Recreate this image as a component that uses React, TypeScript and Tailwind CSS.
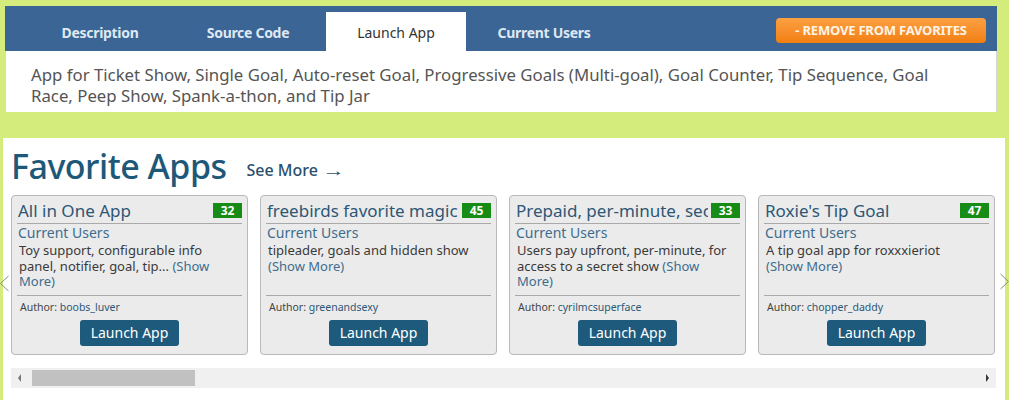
type AppCard = {
  title: string;
  users: number;
  desc: string;
  author: string;
};

const apps: AppCard[] = [
  {
    title: "All in One App",
    users: 32,
    desc: "Toy support, configurable info panel, notifier, goal, tip...",
    author: "boobs_luver",
  },
  {
    title: "freebirds favorite magic",
    users: 45,
    desc: "tipleader, goals and hidden show",
    author: "greenandsexy",
  },
  {
    title: "Prepaid, per-minute, secret show",
    users: 33,
    desc: "Users pay upfront, per-minute, for access to a secret show",
    author: "cyrilmcsuperface",
  },
  {
    title: "Roxie's Tip Goal",
    users: 47,
    desc: "A tip goal app for roxxxieriot",
    author: "chopper_daddy",
  },
];

const tabs = ["Description", "Source Code", "Launch App", "Current Users"];

function Card({ app }: { app: AppCard }) {
  return (
    <div className="flex h-[160px] w-[237px] shrink-0 flex-col rounded-[4px] border border-[#b9b9b9] bg-[#ebebeb] px-[5px]">
      <div className="flex h-[28px] items-center justify-between border-b border-[#a9a9a9] pt-[2px]">
        <span className="overflow-hidden whitespace-nowrap pl-px text-[17px] leading-[21px] text-[#2d5775]">
          {app.title}
        </span>
        <span className="ml-[3px] flex h-[15px] w-[29px] shrink-0 items-center justify-center bg-[#168c16] text-[12px] font-bold leading-none text-white">
          {app.users}
        </span>
      </div>
      <div className="pl-px text-[14px] leading-[17px] text-[#3d6d8e]">Current Users</div>
      <div className="h-[55px] border-b border-[#a9a9a9] pl-[2px] pr-[12px] pt-[2px] text-[13px] leading-[15.5px] text-[#3a3a3a]">
        {app.desc} <span className="text-[#3d6d8e]">(Show More)</span>
      </div>
      <div className="mt-[4px] pl-[3px] text-[10.5px] leading-[14px] text-[#444]">
        Author: <span className="text-[#2d5775]">{app.author}</span>
      </div>
      <div className="mt-[6px] flex justify-center">
        <button className="h-[26px] w-[99px] rounded-[3px] bg-[#1d5a7c] text-[14px] leading-none text-white">
          Launch App
        </button>
      </div>
    </div>
  );
}

export default function App() {
  return (
    <div
      className="h-[400px] w-[1009px] overflow-hidden bg-[#d4ec7c]"
      style={{ fontFamily: '"Noto Sans", "Open Sans", sans-serif' }}
    >
      <div className="ml-[5px] mr-[12px] pt-[6px]">
        <div className="flex h-[45px] items-end justify-between bg-[#3a6595] pl-[25px] pr-[11px]">
          <div className="flex gap-[8px]">
            {tabs.map((t) =>
              t === "Launch App" ? (
                <div
                  key={t}
                  className="flex h-[39px] w-[140px] items-center justify-center bg-white pt-[2px] text-[14px] text-[#333]"
                >
                  {t}
                </div>
              ) : (
                <div
                  key={t}
                  className="flex h-[39px] w-[140px] items-center justify-center pt-[2px] text-[14px] font-bold tracking-[-0.3px] text-[#dfe8f2]"
                >
                  {t}
                </div>
              ),
            )}
          </div>
          <button className="mb-[8px] h-[25px] w-[210px] rounded-[4px] bg-gradient-to-b from-[#fba040] to-[#f27f0c] text-[13px] font-bold tracking-[-0.2px] text-[#fff4e6]">
            - REMOVE FROM FAVORITES
          </button>
        </div>
        <div className="h-[61px] border-x border-[#d6d6d6] bg-white pl-[25px] pr-[40px] pt-[13px] text-[16.8px] leading-[21px] text-[#555]">
          App for Ticket Show, Single Goal, Auto-reset Goal, Progressive Goals (Multi-goal), Goal Counter, Tip
          Sequence, Goal Race, Peep Show, Spank-a-thon, and Tip Jar
        </div>
      </div>
      <div className="mt-[26px] ml-[3px] mr-[4px] h-[262px] bg-white">
        <div className="flex items-baseline pl-[8px] pt-[4px]">
          <h2 className="text-[34px] font-medium leading-[48px] tracking-[-0.5px] text-[#1e5878]">
            Favorite Apps
          </h2>
          <span className="relative top-[-3px] ml-[20px] text-[16px] font-medium text-[#2b4f6b]">
            See More <span className="inline-block scale-x-[1.4] pl-[3px]">→</span>
          </span>
        </div>
        <div className="relative mt-[5px] flex gap-[12px] pl-[8px]">
          {apps.map((a) => (
            <Card key={a.title} app={a} />
          ))}
          <svg
            className="absolute left-[-3px] top-[80px]"
            width="9"
            height="17"
            viewBox="0 0 9 17"
            fill="none"
            stroke="#8a8a8a"
            strokeWidth="1"
          >
            <polyline points="8.5,1 0.5,8.5 8.5,16" />
          </svg>
          <svg
            className="absolute right-[-4px] top-[78px]"
            width="9"
            height="17"
            viewBox="0 0 9 17"
            fill="none"
            stroke="#8a8a8a"
            strokeWidth="1"
          >
            <polyline points="0.5,1 8.5,8.5 0.5,16" />
          </svg>
        </div>
        <div className="ml-[8px] mt-[13px] flex h-[20px] w-[985px] items-center bg-[#f0f0f0] px-[7px]">
          <span className="h-0 w-0 border-y-[4px] border-r-[3px] border-y-transparent border-r-[#777]" />
          <div className="ml-[11px] h-[16px] w-[163px] bg-[#c1c1c1]" />
          <div className="flex-1" />
          <span className="h-0 w-0 border-y-[4px] border-l-[3px] border-y-transparent border-l-[#333]" />
        </div>
      </div>
    </div>
  );
}
